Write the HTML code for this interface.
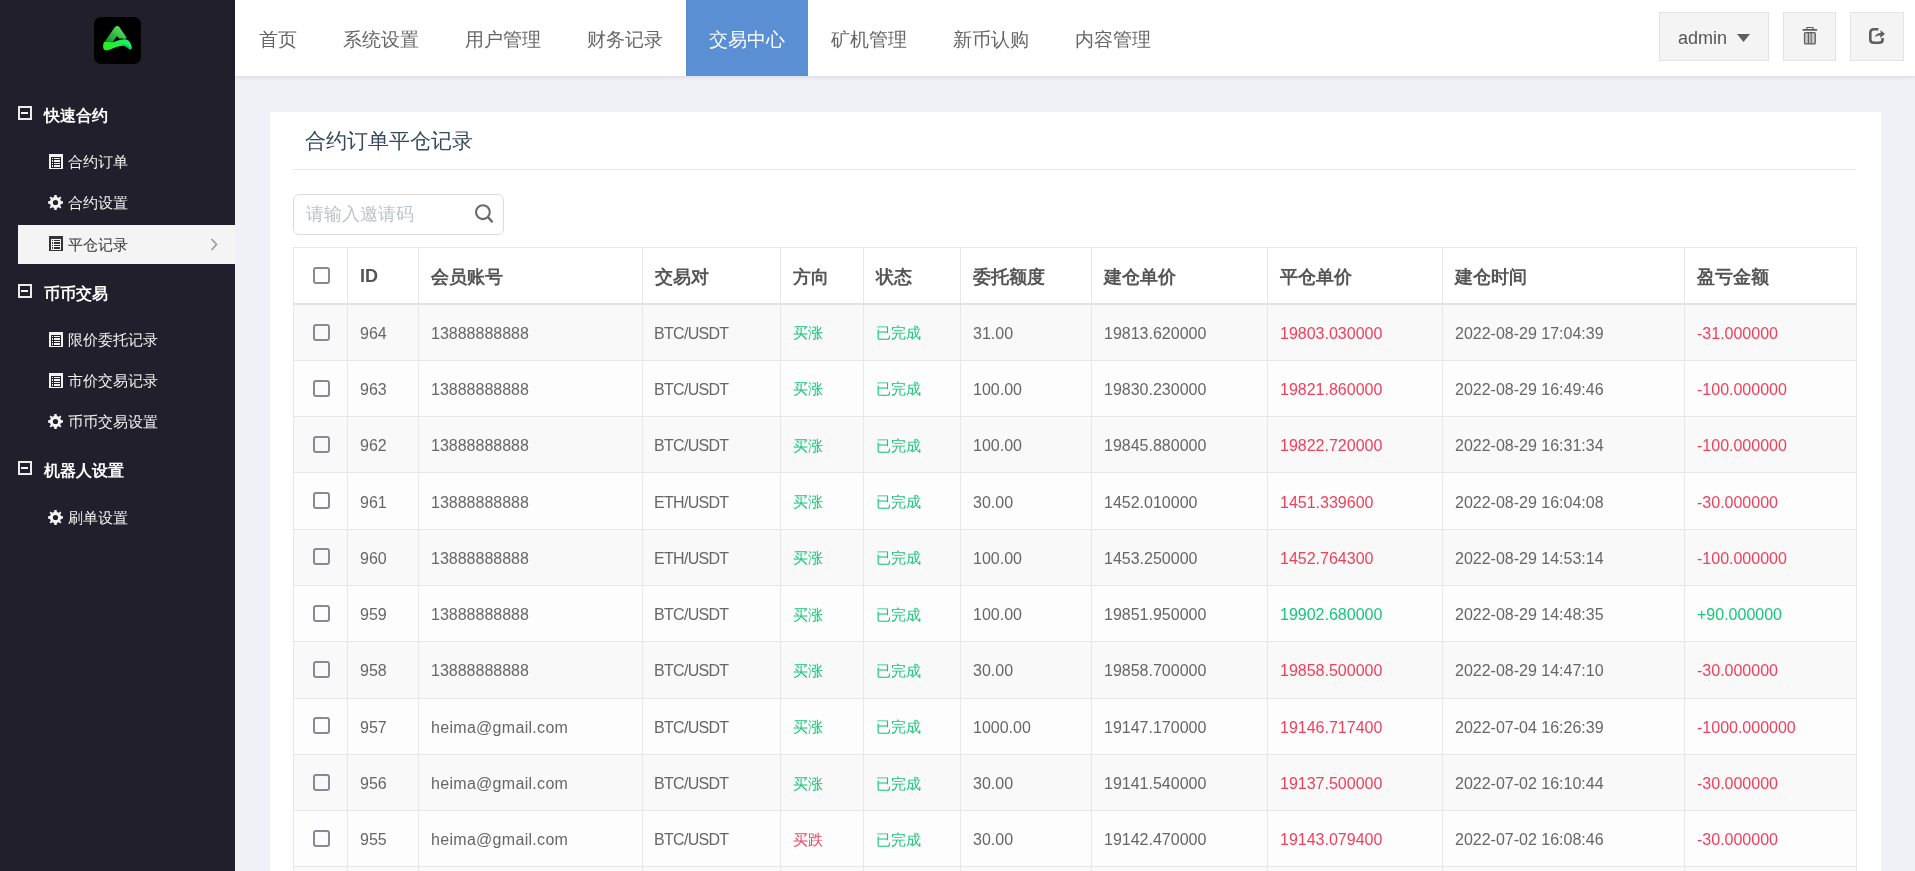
<!DOCTYPE html>
<html><head><meta charset="utf-8">
<style>
*{box-sizing:border-box;margin:0;padding:0}
html,body{width:1915px;height:871px;overflow:hidden}
.side,.top,table,.title,.search,.btn{will-change:transform}
body{background:#f0f1f6;font-family:"Liberation Sans",sans-serif;position:relative;color:#666}
.side{position:absolute;left:0;top:0;width:235px;height:871px;background:#221f2c}
.logo{position:absolute;left:94px;top:17px;width:47px;height:47px;border-radius:7px;background:#000;overflow:hidden}
.grp{position:absolute;left:18px;height:20px;color:#fff;font-weight:bold;font-size:16px;line-height:20px}
.grp .ic{position:absolute;left:0;top:2px;width:14px;height:14px;border:2px solid #ececec;}
.grp .ic:after{content:"";position:absolute;left:1px;top:4px;width:7px;height:2px;background:#f4f4f4}
.grp span{position:absolute;left:26px;top:2px;white-space:nowrap}
.item{position:absolute;left:18px;width:217px;height:39px;color:#f2f2f2;font-size:15px;line-height:39px}
.item span{position:absolute;left:50px;top:0;white-space:nowrap}
.item .li{position:absolute;left:31px;top:12px}
.item.act .li{top:11px}
.item .gi{position:absolute;left:30px;top:12px}
.item.act{background:#f4f4f4;color:#333}
.top{position:absolute;left:235px;top:0;width:1680px;height:76px;background:#fff;box-shadow:0 1px 4px rgba(0,0,0,0.10)}
.nav{position:absolute;left:1px;top:0;height:76px;display:flex}
.nav div{padding:0 23px;font-size:19px;line-height:80px;color:#666;white-space:nowrap}
.nav div.on{background:#5b8fd3;color:#fff}
.btn{position:absolute;top:12px;height:49px;background:#f4f4f4;border:1px solid #e3e3e3}
.adm{position:absolute;left:18px;top:1.5px;line-height:47px;font-size:18px;color:#555}
.caret{position:absolute;left:77px;top:21px}
.item .chev{position:absolute;left:192px;top:13px}
.panel{position:absolute;left:270px;top:112px;width:1611px;height:800px;background:#fff}
.title{position:absolute;left:305px;top:128px;font-size:21px;line-height:26px;color:#34495e;white-space:nowrap}
.hr{position:absolute;left:293px;top:169px;width:1563px;height:1px;background:#e8e8e8}
.search{position:absolute;left:293px;top:194px;width:211px;height:41px;border:1px solid #dcdcdc;border-radius:6px}
.search span{position:absolute;left:12px;top:0;line-height:39px;font-size:18px;color:#bcc3cb;white-space:nowrap}
table{position:absolute;left:293px;top:247px;width:1563px;border-collapse:collapse;table-layout:fixed}
td,th{border:1px solid #e7e7e7;padding:0 0 0 12px;text-align:left;font-size:16px;white-space:nowrap;color:#666;font-weight:normal}
th{height:56.5px;padding-top:2px;font-weight:bold;font-size:18px;color:#555;border-bottom:2px solid #e3e3e3}
td{height:56.3px;padding-top:3px}
tbody tr:nth-child(odd) td{background:#f9f9f9}
tbody tr:nth-child(even) td{background:#fdfdfd}
.cb{display:inline-block;width:17px;height:17px;border:2px solid #8a8898;border-radius:3px;vertical-align:middle;margin-left:7px;position:relative;top:-1px}
td .cb{top:-2.5px}
th .cb{top:-2px}
.pr{letter-spacing:-0.7px;position:relative;left:-1px}
.g{color:#16c77a}
.r{color:#f03f5a}
.cj{font-size:15px;position:relative;top:0px}
.em{letter-spacing:0.3px}
</style></head><body>
<div class="side">
  <div class="logo"><svg width="47" height="47" viewBox="0 0 47 47">
<defs>
<linearGradient id="ga" x1="0" y1="1" x2="1" y2="0"><stop offset="0" stop-color="#138a2c"/><stop offset="0.55" stop-color="#3cc64a"/><stop offset="1" stop-color="#6ef06a"/></linearGradient>
<linearGradient id="gb" x1="0" y1="0" x2="1" y2="0"><stop offset="0" stop-color="#2af01a"/><stop offset="0.6" stop-color="#1ff048"/><stop offset="1" stop-color="#19f07a"/></linearGradient>
</defs>
<path fill="url(#ga)" d="M10.9,24.6 L20.8,10.2 Q23.1,7.6 25.5,10.2 L32.8,21 L31.5,21.7 L25.4,21.4 L22.8,19.1 L18.6,25.6 Z"/>
<path fill="url(#gb)" d="M10.2,25.0 C13.5,24.4 16,25.8 18.8,25.2 C22,24.6 26,21.8 30.9,22.2 C34.5,22.5 37.4,26 37.7,30.5 C37.8,32.5 36.6,33 35.2,32 C33,30.5 30.8,28.6 28.4,28.8 C24.5,29.1 20,31 17.5,32 C14.5,33.2 12,34.2 10.3,32.8 C8.7,31.4 8.8,26.8 10.2,25.0Z"/>
<path fill="#0fb848" opacity="0.6" d="M27.5,27.2 C31.5,26.6 35,28.8 37,31.6 C36.6,32.8 36,32.8 35.2,32 C33,30.5 30.8,28.6 28.4,28.8 Z"/>
</svg></div>
  <div class="grp" style="top:104px"><div class="ic"></div><span>快速合约</span></div>
  <div class="item" style="top:142px"><svg class="li" width="14" height="15" viewBox="0 0 14 15"><path fill="currentColor" fill-rule="evenodd" d="M0,0H14V15H0Z M2,3V14H12V3Z M3,4H4V5H3Z M5,4H11V5H5Z M3,6H4V8H3Z M5,6H11V8H5Z M3,9H4V10H3Z M5,9H11V10H5Z M3,11H4V13H3Z M5,11H11V13H5Z"/></svg><span>合约订单</span></div>
  <div class="item" style="top:183px"><svg class="gi" width="15" height="15" viewBox="0 0 15 15"><path fill="currentColor" fill-rule="evenodd" d="M6.1,2.0 L6.3,0.1 L8.7,0.1 L8.9,2.0 L10.8,2.8 L12.3,1.6 L13.4,2.7 L12.2,4.2 L13.0,6.1 L14.9,6.3 L14.9,8.7 L13.0,8.9 L12.2,10.8 L13.4,12.3 L12.3,13.4 L10.8,12.2 L8.9,13.0 L8.7,14.9 L6.3,14.9 L6.1,13.0 L4.2,12.2 L2.7,13.4 L1.6,12.3 L2.8,10.8 L2.0,8.9 L0.1,8.7 L0.1,6.3 L2.0,6.1 L2.8,4.2 L1.6,2.7 L2.7,1.6 L4.2,2.8Z M10.1,7.5 A2.6,2.6 0 1 0 4.9,7.5 A2.6,2.6 0 1 0 10.1,7.5Z"/></svg><span>合约设置</span></div>
  <div class="item act" style="top:225px"><svg class="li" width="14" height="15" viewBox="0 0 14 15"><path fill="currentColor" fill-rule="evenodd" d="M0,0H14V15H0Z M2,3V14H12V3Z M3,4H4V5H3Z M5,4H11V5H5Z M3,6H4V8H3Z M5,6H11V8H5Z M3,9H4V10H3Z M5,9H11V10H5Z M3,11H4V13H3Z M5,11H11V13H5Z"/></svg><span>平仓记录</span><svg class="chev" width="8" height="13" viewBox="0 0 8 13"><path d="M1.5,1 L6.5,6.5 L1.5,12" fill="none" stroke="#9a9a9a" stroke-width="1.6"/></svg></div>
  <div class="grp" style="top:281.5px"><div class="ic"></div><span>币币交易</span></div>
  <div class="item" style="top:320px"><svg class="li" width="14" height="15" viewBox="0 0 14 15"><path fill="currentColor" fill-rule="evenodd" d="M0,0H14V15H0Z M2,3V14H12V3Z M3,4H4V5H3Z M5,4H11V5H5Z M3,6H4V8H3Z M5,6H11V8H5Z M3,9H4V10H3Z M5,9H11V10H5Z M3,11H4V13H3Z M5,11H11V13H5Z"/></svg><span>限价委托记录</span></div>
  <div class="item" style="top:361px"><svg class="li" width="14" height="15" viewBox="0 0 14 15"><path fill="currentColor" fill-rule="evenodd" d="M0,0H14V15H0Z M2,3V14H12V3Z M3,4H4V5H3Z M5,4H11V5H5Z M3,6H4V8H3Z M5,6H11V8H5Z M3,9H4V10H3Z M5,9H11V10H5Z M3,11H4V13H3Z M5,11H11V13H5Z"/></svg><span>市价交易记录</span></div>
  <div class="item" style="top:402px"><svg class="gi" width="15" height="15" viewBox="0 0 15 15"><path fill="currentColor" fill-rule="evenodd" d="M6.1,2.0 L6.3,0.1 L8.7,0.1 L8.9,2.0 L10.8,2.8 L12.3,1.6 L13.4,2.7 L12.2,4.2 L13.0,6.1 L14.9,6.3 L14.9,8.7 L13.0,8.9 L12.2,10.8 L13.4,12.3 L12.3,13.4 L10.8,12.2 L8.9,13.0 L8.7,14.9 L6.3,14.9 L6.1,13.0 L4.2,12.2 L2.7,13.4 L1.6,12.3 L2.8,10.8 L2.0,8.9 L0.1,8.7 L0.1,6.3 L2.0,6.1 L2.8,4.2 L1.6,2.7 L2.7,1.6 L4.2,2.8Z M10.1,7.5 A2.6,2.6 0 1 0 4.9,7.5 A2.6,2.6 0 1 0 10.1,7.5Z"/></svg><span>币币交易设置</span></div>
  <div class="grp" style="top:459px"><div class="ic"></div><span>机器人设置</span></div>
  <div class="item" style="top:498px"><svg class="gi" width="15" height="15" viewBox="0 0 15 15"><path fill="currentColor" fill-rule="evenodd" d="M6.1,2.0 L6.3,0.1 L8.7,0.1 L8.9,2.0 L10.8,2.8 L12.3,1.6 L13.4,2.7 L12.2,4.2 L13.0,6.1 L14.9,6.3 L14.9,8.7 L13.0,8.9 L12.2,10.8 L13.4,12.3 L12.3,13.4 L10.8,12.2 L8.9,13.0 L8.7,14.9 L6.3,14.9 L6.1,13.0 L4.2,12.2 L2.7,13.4 L1.6,12.3 L2.8,10.8 L2.0,8.9 L0.1,8.7 L0.1,6.3 L2.0,6.1 L2.8,4.2 L1.6,2.7 L2.7,1.6 L4.2,2.8Z M10.1,7.5 A2.6,2.6 0 1 0 4.9,7.5 A2.6,2.6 0 1 0 10.1,7.5Z"/></svg><span>刷单设置</span></div>
</div>
<div class="top">
  <div class="nav">
    <div>首页</div><div>系统设置</div><div>用户管理</div><div>财务记录</div><div class="on">交易中心</div><div>矿机管理</div><div>新币认购</div><div>内容管理</div>
  </div>
</div>
<div class="btn" style="left:1659px;width:110px"><span class="adm">admin</span><svg class="caret" width="13" height="8" viewBox="0 0 13 8"><path d="M0,0H13L6.5,8Z" fill="#5f5f5f"/></svg></div>
<div class="btn" style="left:1783px;width:53px"><svg style="position:absolute;left:18px;top:14px" width="16" height="18" viewBox="0 0 16 18">
<rect x="0.6" y="2.1" width="14.6" height="1.7" rx="0.4" fill="#5f5f5f"/>
<path d="M4.9,2.2 V0.9 Q4.9,0.3 5.5,0.3 H10.4 Q11,0.3 11,0.9 V2.2" fill="none" stroke="#5f5f5f" stroke-width="1.2"/>
<rect x="2.55" y="5.65" width="10.7" height="11.2" rx="0.9" fill="#c9c9c9" stroke="#5f5f5f" stroke-width="1.3"/>
<rect x="5.8" y="5.6" width="1.3" height="11.2" fill="#5f5f5f"/><rect x="8.7" y="5.6" width="1.0" height="11.2" fill="#5f5f5f"/>
</svg></div>
<div class="btn" style="left:1850px;width:54px"><svg style="position:absolute;left:18px;top:15px" width="18" height="17" viewBox="0 0 18 17">
<path d="M9.4,1.3 H5 Q1.3,1.3 1.3,5 V11.4 Q1.3,14.7 5,14.7 H10 Q13.6,14.7 13.6,11.4 V10" fill="none" stroke="#5f5f5f" stroke-width="2.6"/>
<path d="M5.9,9.4 C6.3,6.5 8.6,4.9 11.6,4.9 V1.9 L15.9,6.1 L11.3,9.9 V7.6 C9,7.6 7.2,8.2 5.9,9.4Z" fill="#5f5f5f"/>
</svg></div>
<div class="panel"></div>
<div class="title">合约订单平仓记录</div>
<div class="hr"></div>
<div class="search"><span>请输入邀请码</span><svg style="position:absolute;left:180px;top:9px" width="20" height="20" viewBox="0 0 20 20"><circle cx="8.9" cy="8.2" r="6.9" fill="none" stroke="#6a6a6a" stroke-width="2.1"/><path d="M14.3,13.4 L17.8,17.6" stroke="#6a6a6a" stroke-width="2.4" stroke-linecap="round"/></svg></div>
<table>
<colgroup><col style="width:54px"><col style="width:71px"><col style="width:224px"><col style="width:138px"><col style="width:83px"><col style="width:97px"><col style="width:131px"><col style="width:176px"><col style="width:175px"><col style="width:242px"><col style="width:172px"></colgroup>
<thead><tr><th><span class="cb"></span></th><th>ID</th><th>会员账号</th><th>交易对</th><th>方向</th><th>状态</th><th>委托额度</th><th>建仓单价</th><th>平仓单价</th><th>建仓时间</th><th>盈亏金额</th></tr></thead>
<tbody>
<tr><td><span class="cb"></span></td><td>964</td><td>13888888888</td><td><span class="pr">BTC/USDT</span></td><td class="g"><span class="cj">买涨</span></td><td class="g"><span class="cj">已完成</span></td><td>31.00</td><td>19813.620000</td><td class="r">19803.030000</td><td>2022-08-29 17:04:39</td><td class="r">-31.000000</td></tr>
<tr><td><span class="cb"></span></td><td>963</td><td>13888888888</td><td><span class="pr">BTC/USDT</span></td><td class="g"><span class="cj">买涨</span></td><td class="g"><span class="cj">已完成</span></td><td>100.00</td><td>19830.230000</td><td class="r">19821.860000</td><td>2022-08-29 16:49:46</td><td class="r">-100.000000</td></tr>
<tr><td><span class="cb"></span></td><td>962</td><td>13888888888</td><td><span class="pr">BTC/USDT</span></td><td class="g"><span class="cj">买涨</span></td><td class="g"><span class="cj">已完成</span></td><td>100.00</td><td>19845.880000</td><td class="r">19822.720000</td><td>2022-08-29 16:31:34</td><td class="r">-100.000000</td></tr>
<tr><td><span class="cb"></span></td><td>961</td><td>13888888888</td><td><span class="pr">ETH/USDT</span></td><td class="g"><span class="cj">买涨</span></td><td class="g"><span class="cj">已完成</span></td><td>30.00</td><td>1452.010000</td><td class="r">1451.339600</td><td>2022-08-29 16:04:08</td><td class="r">-30.000000</td></tr>
<tr><td><span class="cb"></span></td><td>960</td><td>13888888888</td><td><span class="pr">ETH/USDT</span></td><td class="g"><span class="cj">买涨</span></td><td class="g"><span class="cj">已完成</span></td><td>100.00</td><td>1453.250000</td><td class="r">1452.764300</td><td>2022-08-29 14:53:14</td><td class="r">-100.000000</td></tr>
<tr><td><span class="cb"></span></td><td>959</td><td>13888888888</td><td><span class="pr">BTC/USDT</span></td><td class="g"><span class="cj">买涨</span></td><td class="g"><span class="cj">已完成</span></td><td>100.00</td><td>19851.950000</td><td class="g">19902.680000</td><td>2022-08-29 14:48:35</td><td class="g">+90.000000</td></tr>
<tr><td><span class="cb"></span></td><td>958</td><td>13888888888</td><td><span class="pr">BTC/USDT</span></td><td class="g"><span class="cj">买涨</span></td><td class="g"><span class="cj">已完成</span></td><td>30.00</td><td>19858.700000</td><td class="r">19858.500000</td><td>2022-08-29 14:47:10</td><td class="r">-30.000000</td></tr>
<tr><td><span class="cb"></span></td><td>957</td><td><span class="em">heima@gmail.com</span></td><td><span class="pr">BTC/USDT</span></td><td class="g"><span class="cj">买涨</span></td><td class="g"><span class="cj">已完成</span></td><td>1000.00</td><td>19147.170000</td><td class="r">19146.717400</td><td>2022-07-04 16:26:39</td><td class="r">-1000.000000</td></tr>
<tr><td><span class="cb"></span></td><td>956</td><td><span class="em">heima@gmail.com</span></td><td><span class="pr">BTC/USDT</span></td><td class="g"><span class="cj">买涨</span></td><td class="g"><span class="cj">已完成</span></td><td>30.00</td><td>19141.540000</td><td class="r">19137.500000</td><td>2022-07-02 16:10:44</td><td class="r">-30.000000</td></tr>
<tr><td><span class="cb"></span></td><td>955</td><td><span class="em">heima@gmail.com</span></td><td><span class="pr">BTC/USDT</span></td><td class="r"><span class="cj">买跌</span></td><td class="g"><span class="cj">已完成</span></td><td>30.00</td><td>19142.470000</td><td class="r">19143.079400</td><td>2022-07-02 16:08:46</td><td class="r">-30.000000</td></tr>
<tr><td><span class="cb"></span></td><td>954</td><td><span class="em">heima@gmail.com</span></td><td><span class="pr">BTC/USDT</span></td><td class="g"><span class="cj">买涨</span></td><td class="g"><span class="cj">已完成</span></td><td>30.00</td><td>19140.000000</td><td class="r">19139.000000</td><td>2022-07-02 16:00:00</td><td class="r">-30.000000</td></tr>
</tbody>
</table>
</body></html>
